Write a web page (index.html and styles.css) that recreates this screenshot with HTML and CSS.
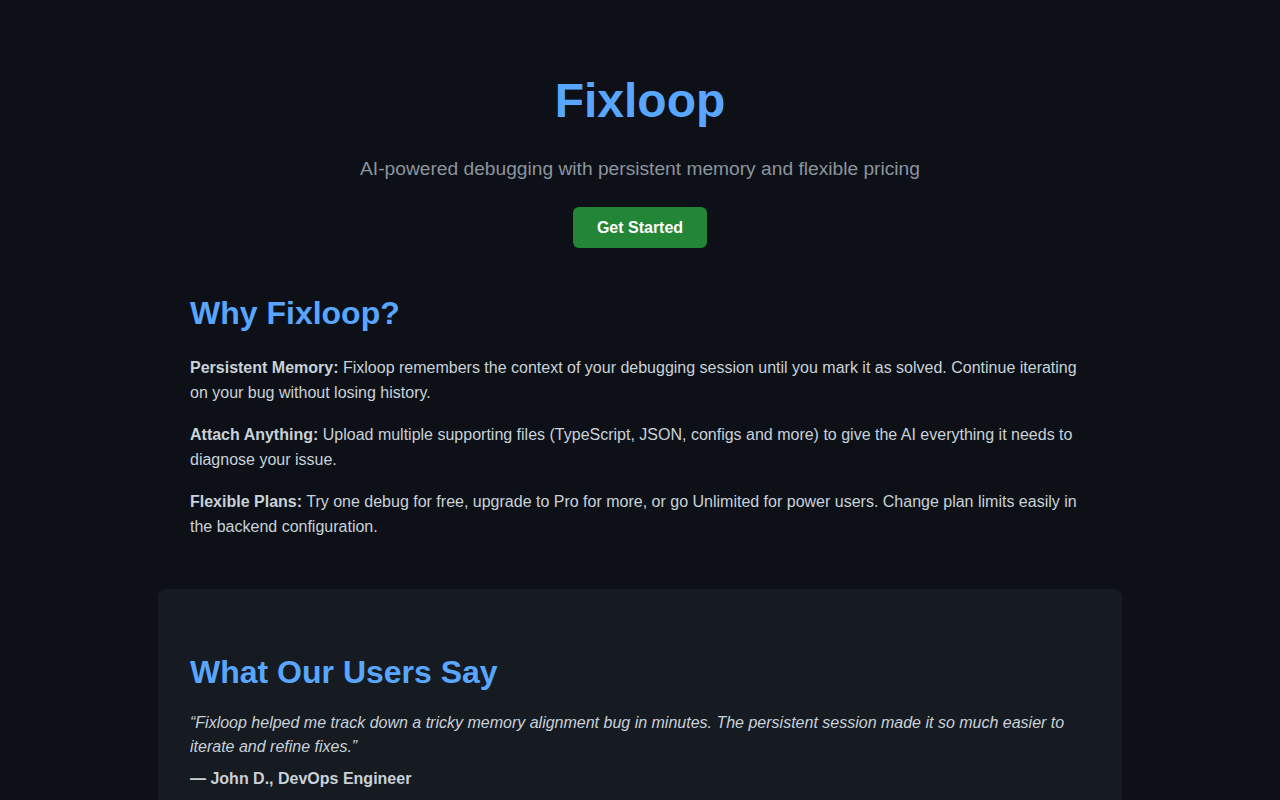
FILE: index.html
```html
<!DOCTYPE html>
<html lang="en">
<head>
<meta charset="utf-8">
<title>Fixloop</title>
<link rel="stylesheet" href="styles.css">
</head>
<body>
<header class="hero">
  <h1 class="hero-title">Fixloop</h1>
  <p class="hero-sub">AI-powered debugging with persistent memory and flexible pricing</p>
  <a class="btn" href="#">Get Started</a>
</header>
<main>
  <section class="section why">
    <h2 class="section-title">Why Fixloop?</h2>
    <p class="feature"><strong>Persistent Memory:</strong> Fixloop remembers the context of your debugging session until you mark it as solved. Continue iterating on your bug without losing history.</p>
    <p class="feature"><strong>Attach Anything:</strong> Upload multiple supporting files (TypeScript, JSON, configs and more) to give the AI everything it needs to diagnose your issue.</p>
    <p class="feature"><strong>Flexible Plans:</strong> Try one debug for free, upgrade to Pro for more, or go Unlimited for power users. Change plan limits easily in the backend configuration.</p>
  </section>
  <section class="section card">
    <h2 class="section-title">What Our Users Say</h2>
    <blockquote class="quote">“Fixloop helped me track down a tricky memory alignment bug in minutes. The persistent session made it so much easier to iterate and refine fixes.”</blockquote>
    <p class="author">— John D., DevOps Engineer</p>
  </section>
</main>
</body>
</html>
```
FILE: styles.css
```css
* { box-sizing: border-box; }
html, body {
  margin: 0;
  background: #0d1117;
}
body {
  font-family: "Liberation Sans", Arial, sans-serif;
  color: #c9d1d9;
  font-size: 16px;
  line-height: 1.6;
}
.hero {
  text-align: center;
  padding: 72px 32px 0;
}
.hero-title {
  margin: 0 0 23.5px;
  font-size: 48px;
  line-height: 57.6px;
  color: #58a6ff;
  font-weight: bold;
}
.hero-sub {
  margin: 0 0 22px;
  font-size: 19.2px;
  line-height: 32px;
  color: #8b949e;
}
.btn {
  display: inline-block;
  background: #238636;
  color: #ffffff;
  font-weight: bold;
  font-size: 16px;
  line-height: 19px;
  padding: 11px 24px;
  border-radius: 6px;
  text-decoration: none;
}
.section {
  max-width: 964px;
  margin: 0 auto;
  padding: 0 32px;
}
.why {
  margin-top: 46px;
  padding-bottom: 1px;
}
.section-title {
  margin: 0 0 22px;
  font-size: 32px;
  line-height: 38.4px;
  color: #58a6ff;
  font-weight: bold;
}
.feature {
  margin: 0 0 16px;
  line-height: 25.6px;
}
.feature strong { font-weight: bold; }
.card {
  margin-top: 32px;
  background: #161b22;
  border-radius: 8px;
  padding-top: 64px;
  padding-bottom: 40px;
}
.card .section-title {
  margin-bottom: 20px;
}
.quote {
  margin: 0 0 7px;
  font-style: italic;
  line-height: 24px;
}
.author {
  margin: 0;
  font-weight: bold;
  line-height: 25.6px;
}
```
